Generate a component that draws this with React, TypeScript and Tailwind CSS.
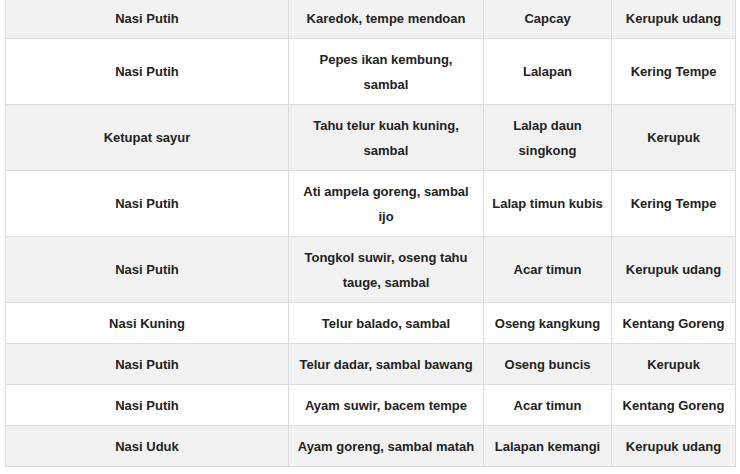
const rows: [string, string, string, string][] = [
  ["Nasi Putih", "Karedok, tempe mendoan", "Capcay", "Kerupuk udang"],
  ["Nasi Putih", "Pepes ikan kembung, sambal", "Lalapan", "Kering Tempe"],
  ["Ketupat sayur", "Tahu telur kuah kuning, sambal", "Lalap daun singkong", "Kerupuk"],
  ["Nasi Putih", "Ati ampela goreng, sambal ijo", "Lalap timun kubis", "Kering Tempe"],
  ["Nasi Putih", "Tongkol suwir, oseng tahu tauge, sambal", "Acar timun", "Kerupuk udang"],
  ["Nasi Kuning", "Telur balado, sambal", "Oseng kangkung", "Kentang Goreng"],
  ["Nasi Putih", "Telur dadar, sambal bawang", "Oseng buncis", "Kerupuk"],
  ["Nasi Putih", "Ayam suwir, bacem tempe", "Acar timun", "Kentang Goreng"],
  ["Nasi Uduk", "Ayam goreng, sambal matah", "Lalapan kemangi", "Kerupuk udang"],
]

export default function App() {
  return (
    <div className="w-[740px] h-[474px] overflow-hidden bg-white pl-[5px] font-['Liberation_Sans',Arial,sans-serif]">
      <table className="table-fixed border-collapse w-[730px] -mt-[3px] text-[13px] font-bold text-[#222] leading-[25px]">
        <colgroup>
          <col className="w-[283px]" />
          <col className="w-[195px]" />
          <col className="w-[128px]" />
          <col className="w-[124px]" />
        </colgroup>
        <tbody>
          {rows.map((r, i) => (
            <tr key={i} className={i % 2 === 0 ? "bg-[#f2f2f2]" : "bg-white"}>
              {r.map((c, j) => (
                <td key={j} className="border border-[#dddddd] px-2 py-[7.5px] text-center align-middle">
                  {c}
                </td>
              ))}
            </tr>
          ))}
        </tbody>
      </table>
    </div>
  )
}
